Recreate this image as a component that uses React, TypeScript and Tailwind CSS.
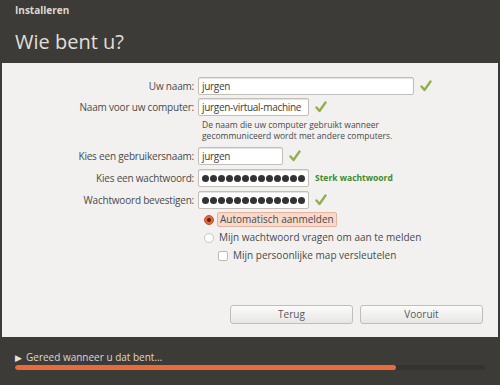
import React from 'react';

const Check: React.FC = () => (
  <svg width="12" height="12" viewBox="0 0 12 12" className="shrink-0">
    <path d="M1.5 6.5 L4.5 10 L10.5 1.5" fill="none" stroke="#93ae4c" strokeWidth="2.4" strokeLinecap="round" strokeLinejoin="round" />
  </svg>
);

const Field: React.FC<{ w: string; children: React.ReactNode }> = ({ w, children }) => (
  <div className={`${w} h-[18px] bg-white border border-[#c2bfb9] rounded-[2px] shadow-[inset_0_1px_1px_rgba(0,0,0,0.12)] flex items-center px-[3px] text-[10px] tracking-[-0.3px] text-[#3c3c3c] overflow-hidden whitespace-nowrap`}>
    {children}
  </div>
);

const Dots: React.FC = () => (
  <div className="w-full flex justify-end gap-[1px] overflow-hidden">
    {Array.from({ length: 15 }).map((_, i) => (
      <span key={i} className="w-[7px] h-[7px] rounded-full bg-[#333] shrink-0" />
    ))}
  </div>
);

const Row: React.FC<{ label: string; children: React.ReactNode; className?: string }> = ({ label, children, className }) => (
  <div className={`flex items-center ${className ?? ''}`}>
    <div className="w-[196px] pr-[4px] text-right text-[10px] tracking-[-0.2px] text-[#4a4a4a] whitespace-nowrap">{label}</div>
    <div className="flex items-center gap-[6px]">{children}</div>
  </div>
);

const App: React.FC = () => {
  return (
    <div className="w-[500px] h-[385px] bg-[#3c3b37] flex flex-col" style={{ fontFamily: '"Open Sans", "Noto Sans", sans-serif' }}>
      <div className="h-[63px] px-[15px] shrink-0">
        <div className="pt-[3px] text-[10px] font-bold text-[#dcd8d0]">Installeren</div>
        <div className="mt-[14px] text-[20px] text-[#e2dfda] leading-none">Wie bent u?</div>
      </div>

      <div className="mx-[2px] h-[274px] bg-[#f2f1f0] flex flex-col pt-[14px] shrink-0">
        <Row label="Uw naam:">
          <Field w="w-[216px]">jurgen</Field>
          <Check />
        </Row>
        <Row label="Naam voor uw computer:" className="mt-[3px]">
          <Field w="w-[111px]">jurgen-virtual-machine</Field>
          <Check />
        </Row>
        <div className="ml-[200px] mt-[3px] text-[8.5px] leading-[11px] text-[#4a4a4a]">
          De naam die uw computer gebruikt wanneer<br />gecommuniceerd wordt met andere computers.
        </div>
        <Row label="Kies een gebruikersnaam:" className="mt-[6px]">
          <Field w="w-[85px]">jurgen</Field>
          <Check />
        </Row>
        <Row label="Kies een wachtwoord:" className="mt-[4px]">
          <Field w="w-[111px]"><Dots /></Field>
          <span className="text-[8.5px] font-bold text-[#3c8c2c]">Sterk wachtwoord</span>
        </Row>
        <Row label="Wachtwoord bevestigen:" className="mt-[4px]">
          <Field w="w-[111px]"><Dots /></Field>
          <Check />
        </Row>

        <div className="ml-[202px] mt-[3px] flex items-center gap-[3px]">
          <span className="w-[10px] h-[10px] rounded-full bg-[#e0673f] border border-[#c65430] flex items-center justify-center">
            <span className="w-[4px] h-[4px] rounded-full bg-[#5a2010]" />
          </span>
          <span className="px-[2px] h-[15px] flex items-center bg-[#f7dacd] border border-[#ecb29b] rounded-[2px] text-[10px] text-[#4a4a4a]">
            Automatisch aanmelden
          </span>
        </div>
        <div className="ml-[202px] mt-[3px] flex items-center gap-[5px]">
          <span className="w-[10px] h-[10px] rounded-full bg-white border border-[#c9c6c0]" />
          <span className="text-[10px] text-[#4a4a4a]">Mijn wachtwoord vragen om aan te melden</span>
        </div>
        <div className="ml-[216px] mt-[3px] flex items-center gap-[5px]">
          <span className="w-[10px] h-[10px] rounded-[2px] bg-white border border-[#bdbab4]" />
          <span className="text-[10px] text-[#4a4a4a]">Mijn persoonlijke map versleutelen</span>
        </div>

        <div className="mt-auto mb-[13px] mr-[15px] flex justify-end gap-[7px]">
          <button className="w-[123px] h-[19px] rounded-[3px] border border-[#c1beb8] bg-gradient-to-b from-[#fbfbfa] to-[#e7e6e4] text-[10px] text-[#5a5a5a]">Terug</button>
          <button className="w-[123px] h-[19px] rounded-[3px] border border-[#c1beb8] bg-gradient-to-b from-[#fbfbfa] to-[#e7e6e4] text-[10px] text-[#5a5a5a]">Vooruit</button>
        </div>
      </div>

      <div className="flex-1 px-[15px] pt-[15px]">
        <div className="flex items-center gap-[4px] text-[10px] text-[#dcd8d0] leading-none">
          <span className="text-[9px] text-[#e6e3de]">▶</span>
          <span>Gereed wanneer u dat bent…</span>
        </div>
        <div className="mt-[3px] w-[470px] h-[5px] rounded-full bg-[#34332f] overflow-hidden">
          <div className="h-full bg-[#e96b3c] rounded-full" style={{ width: '81%' }} />
        </div>
      </div>
    </div>
  );
};

export default App;
